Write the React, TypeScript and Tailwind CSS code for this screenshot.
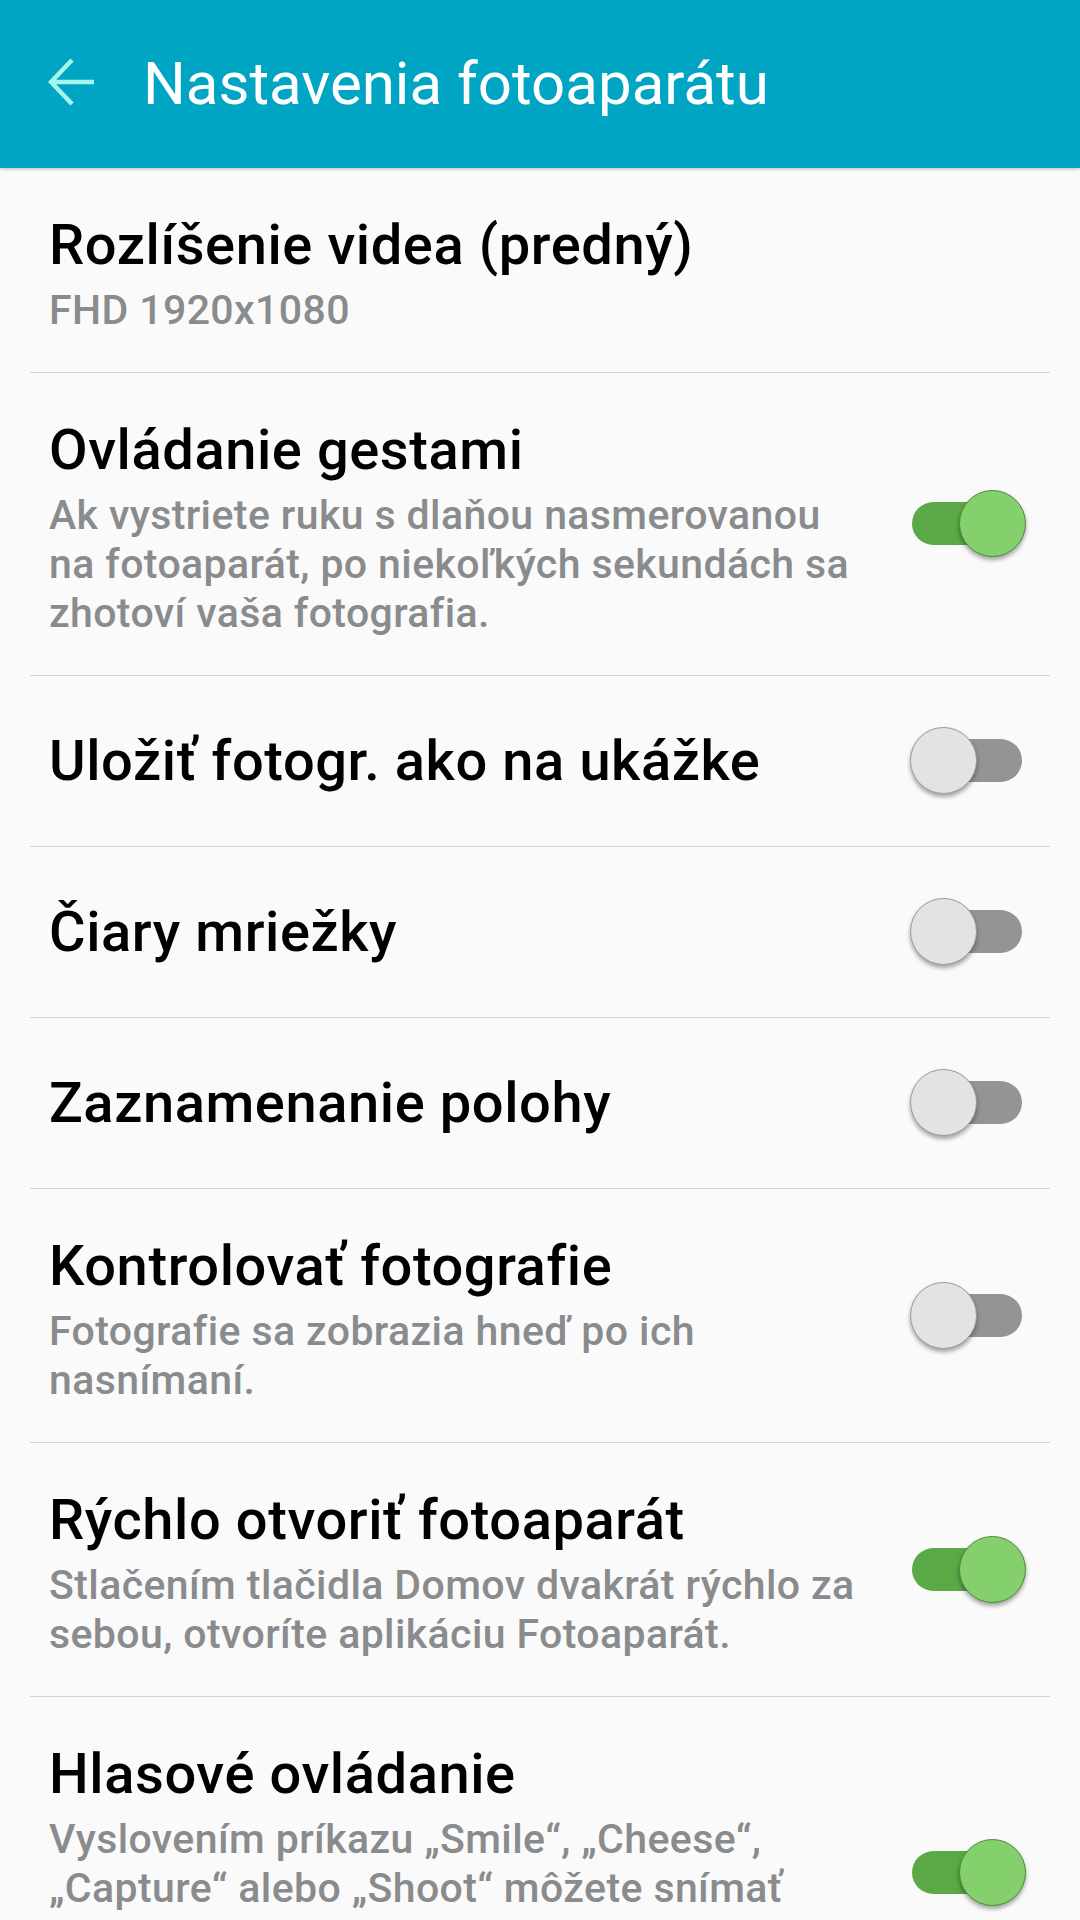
import React from "react";

type Item = {
  title: string;
  desc?: React.ReactNode;
  toggle?: boolean;
  extra?: boolean;
};

const items: Item[] = [
  { title: "Rozlíšenie videa (predný)", desc: "FHD 1920x1080" },
  {
    title: "Ovládanie gestami",
    desc: (
      <>
        Ak vystriete ruku s dlaňou nasmerovanou
        <br />
        na fotoaparát, po niekoľkých sekundách sa
        <br />
        zhotoví vaša fotografia.
      </>
    ),
    toggle: true,
  },
  { title: "Uložiť fotogr. ako na ukážke", toggle: false },
  { title: "Čiary mriežky", toggle: false },
  { title: "Zaznamenanie polohy", toggle: false },
  {
    title: "Kontrolovať fotografie",
    desc: (
      <>
        Fotografie sa zobrazia hneď po ich
        <br />
        nasnímaní.
      </>
    ),
    toggle: false,
  },
  {
    title: "Rýchlo otvoriť fotoaparát",
    desc: (
      <>
        Stlačením tlačidla Domov dvakrát rýchlo za
        <br />
        sebou, otvoríte aplikáciu Fotoaparát.
      </>
    ),
    toggle: true,
  },
  {
    title: "Hlasové ovládanie",
    desc: (
      <>
        Vyslovením príkazu „Smile“, „Cheese“,
        <br />
        „Capture“ alebo „Shoot“ môžete snímať
      </>
    ),
    toggle: true,
    extra: true, // rest of the text runs off the bottom of the screen
  },
];

function Toggle({ on }: { on: boolean }) {
  return (
    <div className="relative w-[112px] h-[68px] shrink-0">
      <div
        className={
          on
            ? "absolute left-0 right-[2px] top-[12px] h-[43px] rounded-full bg-[#5ba847]"
            : "absolute left-0 right-[2px] top-[12px] h-[43px] rounded-full bg-[#949494]"
        }
      />
      <div
        className={
          on
            ? "absolute right-[-2px] top-0 w-[67px] h-[67px] rounded-full bg-[#84d06c] border-[1.5px] border-[#4f8a3e] shadow-[0_3px_4px_rgba(0,0,0,0.35)]"
            : "absolute left-[-2px] top-0 w-[67px] h-[67px] rounded-full bg-[#e3e3e3] border-[1.5px] border-[#9a9a9a] shadow-[0_3px_4px_rgba(0,0,0,0.35)]"
        }
      />
    </div>
  );
}

function Row({ item }: { item: Item }) {
  let text = "flex-1 min-w-0 ";
  if (!item.desc) text += "py-[55px]";
  else if (item.extra) text += "pt-[47px] pb-[135px]";
  else text += "pt-[47px] pb-[37px]";
  return (
    <div className="mx-[30px] border-b border-[#d3d3d3] pl-[19px] pr-[26px] flex items-center">
      <div className={text}>
        <div className="text-[56px] leading-[60px] font-medium tracking-[0.6px] text-black">{item.title}</div>
        {item.desc && (
          <div className="mt-[11px] text-[41px] leading-[49px] font-medium tracking-[0.4px] text-[#898b8d] whitespace-nowrap">
            {item.desc}
          </div>
        )}
      </div>
      {item.toggle !== undefined && <Toggle on={item.toggle} />}
    </div>
  );
}

export default function App() {
  return (
    <div className="w-[1080px] h-[1920px] overflow-hidden bg-[#fafafa] font-['Roboto',sans-serif]">
      <header className="h-[168px] bg-[#00a5c4] flex items-center pl-[48px] shadow-[0_1px_3px_rgba(0,0,0,0.25)] relative z-10">
        <svg width="48" height="48" viewBox="0 0 48 48" fill="none" className="mt-[-4px]">
          <path d="M46 24H4M24 2L3 24l21 22" stroke="#a6f6ee" strokeWidth="4.5" />
        </svg>
        <h1 className="ml-[47px] text-[60px] text-white font-normal">Nastavenia fotoaparátu</h1>
      </header>
      <div>
        {items.map((it) => (
          <Row key={it.title} item={it} />
        ))}
      </div>
    </div>
  );
}
